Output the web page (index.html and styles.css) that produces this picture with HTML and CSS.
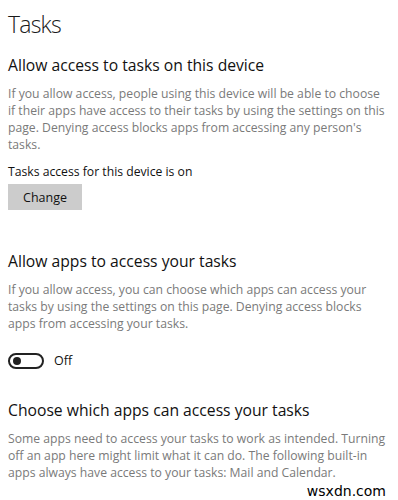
FILE: index.html
```html
<!DOCTYPE html>
<html>
	<head>
		<title>Tasks</title>
		<link rel="stylesheet" href="styles.css">
	</head>
	<body>
		<main>
			<h1>Tasks</h1>
			<section class="block">
				<h2>Allow access to tasks on this device</h2>
				<p class="note">If you allow access, people using this device will be able to choose if their apps have access to their tasks by using the settings on this page. Denying access blocks apps from accessing any person's tasks.</p>
				<p class="status">Tasks access for this device is on</p>
				<button type="button" class="change">Change</button>
			</section>
			<section class="block apps">
				<h2>Allow apps to access your tasks</h2>
				<p class="note">If you allow access, you can choose which apps can access your tasks by using the settings on this page. Denying access blocks apps from accessing your tasks.</p>
				<div class="toggle-row">
					<span class="toggle"><span class="knob"></span></span>
					<span class="toggle-label">Off</span>
				</div>
			</section>
			<section class="block choose">
				<h2>Choose which apps can access your tasks</h2>
				<p class="note">Some apps need to access your tasks to work as intended. Turning off an app here might limit what it can do. The following built-in apps always have access to your tasks: Mail and Calendar.</p>
			</section>
		</main>
		<div class="mark">wsxdn.com</div>
	</body>
</html>
```

FILE: styles.css
```css
html,
body {
	margin: 0;
	background-color: #ffffff;
}
body {
	position: relative;
	height: 500px;
	overflow: hidden;
	font-family: "Open Sans", "Noto Sans", sans-serif;
	color: #000000;
}
main {
	padding: 8px 8px 0 8px;
}
h1 {
	margin: 0;
	font-size: 23px;
	font-weight: 300;
	letter-spacing: -0.8px;
	line-height: 32px;
	color: #1a1a1a;
}
h2 {
	margin: 0;
	font-size: 15.7px;
	font-weight: 400;
	line-height: 22px;
	color: #111111;
}
.block {
	margin-top: 14px;
}
.note {
	margin: 9px 0 0 0;
	font-size: 12.2px;
	line-height: 17px;
	color: #7a7a7a;
}
.status {
	margin: 10px 0 0 0;
	font-size: 12.2px;
	line-height: 17px;
	color: #111111;
}
.change {
	margin-top: 4px;
	width: 74px;
	height: 26px;
	border: none;
	background-color: #cccccc;
	font-family: "Open Sans", "Noto Sans", sans-serif;
	font-size: 12.5px;
	color: #111111;
	padding: 0;
}
.apps {
	margin-top: 40px;
}
.toggle-row {
	display: flex;
	align-items: center;
	gap: 10px;
	margin-top: 20px;
}
.toggle {
	display: flex;
	align-items: center;
	box-sizing: border-box;
	width: 36px;
	height: 16px;
	border: 2px solid #222222;
	border-radius: 8px;
	padding-left: 3px;
}
.knob {
	width: 8px;
	height: 8px;
	border-radius: 50%;
	background-color: #222222;
}
.toggle-label {
	font-size: 12.5px;
	color: #111111;
}
.choose {
	margin-top: 30px;
}
.mark {
	position: absolute;
	right: 8px;
	bottom: 3px;
	background-color: #ffffff;
	font-family: "DejaVu Sans", sans-serif;
	font-size: 14px;
	line-height: 11px;
	padding: 0 4px;
	color: #000000;
}
```
